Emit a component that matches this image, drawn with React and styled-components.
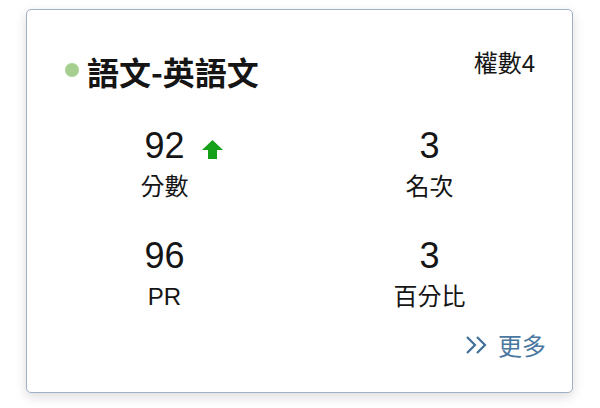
import React from "react";
import styled, { createGlobalStyle } from "styled-components";

const Global = createGlobalStyle`
  html, body { margin: 0; padding: 0; background: #ffffff; }
  body { font-family: "Liberation Sans", "Noto Sans CJK TC", sans-serif; color: #111; }
  * { box-sizing: border-box; }
`;

const Page = styled.div`
  width: 600px;
  height: 408px;
  padding: 9px 0 0 26px;
`;

const Card = styled.section`
  width: 547px;
  height: 384px;
  border: 1px solid #9fb1c4;
  border-radius: 5px;
  background: #fff;
  box-shadow: 0 4px 12px rgba(0, 0, 0, 0.14);
  padding: 36px 26px 0 38px;
  display: flex;
  flex-direction: column;
`;

const Header = styled.header`
  display: flex;
  justify-content: space-between;
  align-items: flex-start;
  padding-right: 11px;
`;

const Title = styled.h2`
  margin: 5px 0 0;
  display: flex;
  align-items: center;
  gap: 8px;
  font-family: "Noto Sans CJK TC", sans-serif;
  font-weight: 700;
  font-size: 32px;
  line-height: 40px;
  color: #151515;
`;

const Dot = styled.span`
  width: 14px;
  height: 14px;
  border-radius: 50%;
  background: #a6cf8f;
  margin-top: -2px;
`;

const Weight = styled.span`
  margin-top: 3px;
  font-size: 24px;
  line-height: 30px;
  color: #151515;
`;

const Stats = styled.div`
  display: grid;
  grid-template-columns: repeat(2, 265px);
  row-gap: 34px;
  margin: 35px 0 0 -33px;
`;

const Stat = styled.div`
  display: flex;
  flex-direction: column;
  align-items: center;
`;

const Value = styled.div`
  position: relative;
  font-size: 36px;
  line-height: 40px;
  color: #151515;
`;

const Trend = styled.svg`
  position: absolute;
  left: calc(100% + 17px);
  top: 14px;
  width: 21px;
  height: 19px;
`;

const Label = styled.div`
  margin-top: 6px;
  font-size: 24px;
  line-height: 30px;
  color: #151515;
`;

const More = styled.a`
  align-self: flex-end;
  margin-top: 18px;
  display: flex;
  align-items: center;
  gap: 10px;
  font-family: "Noto Sans CJK TC", sans-serif;
  font-size: 24px;
  line-height: 30px;
  color: #4a77a0;
  text-decoration: none;
`;

const Chevrons = styled.svg`
  width: 23px;
  height: 20px;
`;

const UpArrow = () => (
  <Trend viewBox="0 0 21 19">
    <path d="M10.5 0 L21 10 L15 10 L15 19 L6 19 L6 10 L0 10 Z" fill="#16a01a" />
  </Trend>
);

const stats = [
  { value: "92", label: "分數", up: true },
  { value: "3", label: "名次" },
  { value: "96", label: "PR" },
  { value: "3", label: "百分比" },
];

export default function App() {
  return (
    <>
      <Global />
      <Page>
        <Card>
          <Header>
            <Title>
              <Dot />
              語文-英語文
            </Title>
            <Weight>權數4</Weight>
          </Header>
          <Stats>
            {stats.map((s, i) => (
              <Stat key={i}>
                <Value>
                  {s.value}
                  {s.up && <UpArrow />}
                </Value>
                <Label>{s.label}</Label>
              </Stat>
            ))}
          </Stats>
          <More href="#">
            <Chevrons viewBox="0 0 23 20" fill="none" stroke="#3f6f99" strokeWidth="2.2" strokeLinejoin="miter">
              <path d="M2 2 L10 10 L2 18" />
              <path d="M12 2 L20 10 L12 18" />
            </Chevrons>
            更多
          </More>
        </Card>
      </Page>
    </>
  );
}
